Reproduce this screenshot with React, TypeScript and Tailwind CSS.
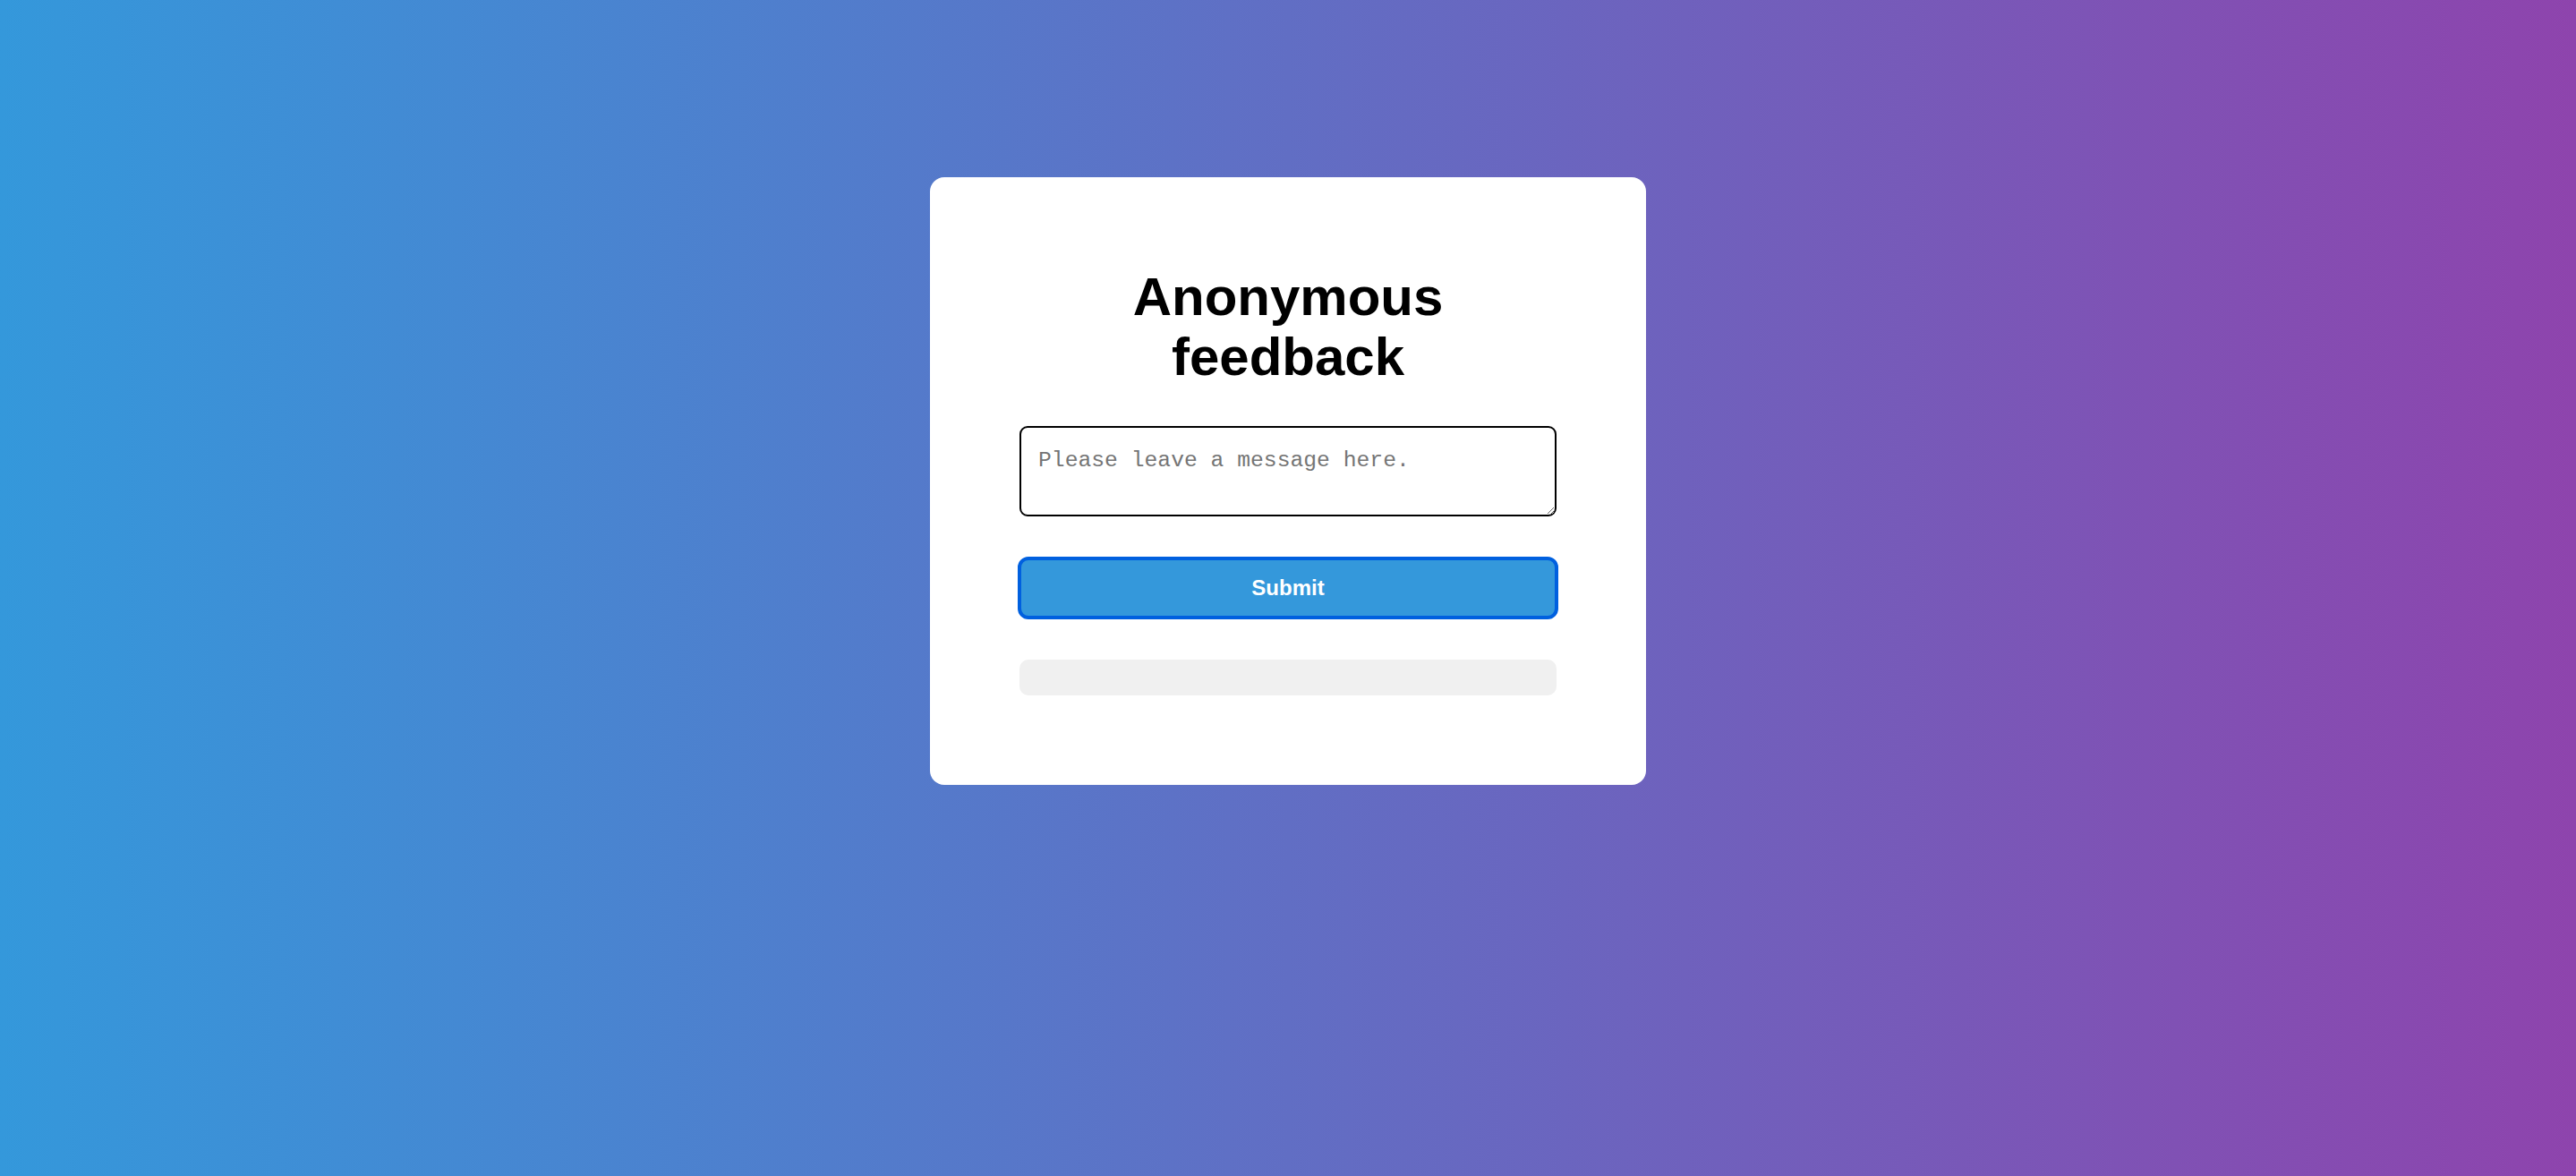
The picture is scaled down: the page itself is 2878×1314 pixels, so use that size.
export default function App() {
  return (
    <div className="min-h-screen w-full bg-[linear-gradient(to_right,#3498db,#8e44ad)] pt-[198px] font-['Liberation_Sans',Arial,sans-serif]">
      {/* Card */}
      <div className="mx-auto w-[800px] rounded-[16px] bg-white px-[100px] pt-[100px] pb-[100px]">
        <h1 className="text-center text-[60px] font-bold leading-[67px] text-black">
          Anonymous feedback
        </h1>

        <textarea
          className="mt-[44px] block h-[101px] w-full rounded-[9px] border-2 border-black bg-white pl-[19px] pt-[18px] font-['Liberation_Mono','Courier_New',monospace] text-[24.7px] leading-normal text-black outline-none placeholder:text-[#757575]"
          placeholder="Please leave a message here."
        />

        <button
          className="mt-[47px] flex h-[66px] w-full items-center justify-center rounded-[10px] bg-[#3498db] text-[24px] font-bold text-white outline-4 outline-solid outline-[#0060df] -outline-offset-2"
        >
          Submit
        </button>

        {/* Response area */}
        <div className="mt-[47px] h-[40px] w-full rounded-[10px] bg-[#f0f0f0]" />
      </div>
    </div>
  );
}
